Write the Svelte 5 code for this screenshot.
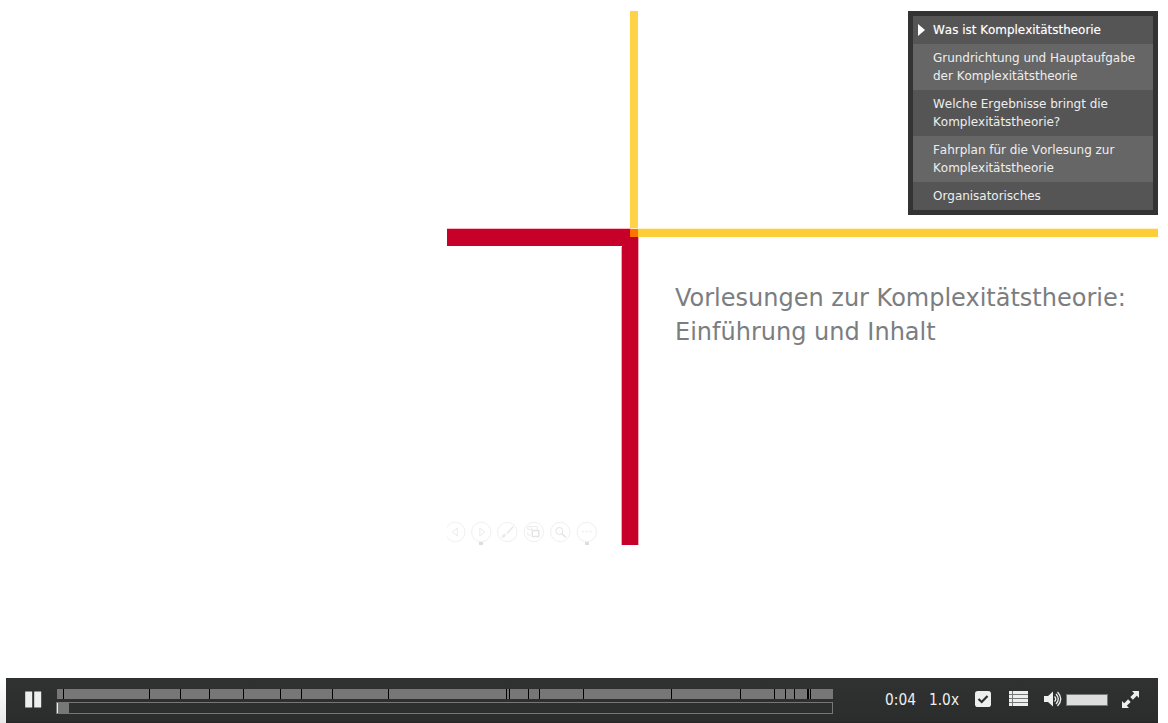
<script>
  const chapters = [
    ['Was ist Komplexitätstheorie'],
    ['Grundrichtung und Hauptaufgabe', 'der Komplexitätstheorie'],
    ['Welche Ergebnisse bringt die', 'Komplexitätstheorie?'],
    ['Fahrplan für die Vorlesung zur', 'Komplexitätstheorie'],
    ['Organisatorisches']
  ];
  const marks = [6, 92, 123, 152, 186, 223, 244, 275, 331, 449, 452, 471, 482, 526, 614, 683, 717, 728, 737, 750, 751, 753];
</script>

<div class="player">
  <div class="stage">
    <div class="slide">
      <svg class="art" width="711" height="534" viewBox="0 0 711 534">
        <rect x="183" y="0" width="8" height="218" fill="#ffd247" />
        <rect x="183" y="217" width="528" height="1" fill="#fff0bd" />
        <rect x="183" y="218" width="528" height="8" fill="#fdce39" />
        <rect x="0" y="217" width="184" height="1" fill="#ffb5c4" />
        <path d="M0 218H191V534H175V235H0Z" fill="#c70029" />
        <rect x="174" y="236" width="1" height="298" fill="#efa4cc" />
        <rect x="191" y="226" width="1" height="308" fill="#e9a9b5" />
        <rect x="183" y="218" width="8" height="8" fill="#ff7200" />
        <g fill="none" stroke="#f0f0f0" transform="translate(-.7 0)">
          {#each [9, 35, 61, 87.5, 114, 140.5] as cx}
            <circle {cx} cy="521" r="9.7" />
          {/each}
          <path d="M11 517l-5 4 5 4zM33.500 517l5 4-5 4z" stroke="#ebebeb" />
          <path d="M60.500 522.500l6.500-7" stroke="#e9e9e9" stroke-width="1.600" />
          <path d="M55 527l3-.5 2-2.500-2-1.500-2 2z" fill="#eaeaea" stroke="none" />
          <path d="M81.500 515.500h4v3h-4zM87 515.500h4v3M81.500 521v3h3" stroke="#ebebeb" />
          <rect x="86" y="519.500" width="6.500" height="6" stroke="#e4e4e4" stroke-width="1.500" />
          <circle cx="113" cy="520" r="3.500" stroke="#e4e4e4" />
          <path d="M115.500 522.500l4 4" stroke="#e4e4e4" stroke-width="1.700" />
          <path d="M135.500 520.500h10" stroke-width="1.500" stroke-dasharray="2.500 1.200" />
        </g>
        <path d="M32 531h4v3h-4zM138 531h4v3h-4z" fill="#dedede" />
      </svg>
      <h1>
        <span class="first">Vorlesungen zur Komplexitätstheorie:</span>
        <span class="second">Einführung und Inhalt</span>
      </h1>
      <ul class="menu">
        {#each chapters as lines, i}
          <li class:active={i === 0}>
            {#each lines as line}<span>{line}</span>{/each}
          </li>
        {/each}
      </ul>
    </div>
  </div>
  <div class="controls">
    <svg class="pause" width="18" height="18" viewBox="0 0 18 18"><path d="M.2 .5h7v16h-7zM9.200 .5h7v16h-7z" fill="#eee" /></svg>
    <div class="tracks">
      <svg class="segments" width="776" height="10" viewBox="0 0 776 10">
        <rect width="776" height="10" fill="#777" />
        {#each marks as x}<rect {x} y="0" width="1" height="10" fill="#000" />{/each}
      </svg>
      <div class="progress"><div class="loaded"></div></div>
    </div>
    <span class="time">0:04</span>
    <span class="rate">1.0x</span>
    <svg class="check" width="16" height="16" viewBox="0 0 16 16"><rect width="16" height="16" rx="2.800" fill="#eee" /><path d="M3.500 8l3.200 3 5.800-6" fill="none" stroke="#2d3030" stroke-width="2.200" /></svg>
    <svg class="list" width="19" height="15" viewBox="0 0 19 15"><path d="M0 0h19v15H0z" fill="#777" /><path d="M0 0h3v3H0zM4 0h15v3H4zM0 4h3v3H0zM4 4h15v3H4zM0 8h3v3H0zM4 8h15v3H4zM0 12h3v3H0zM4 12h15v3H4z" fill="#eee" /></svg>
    <svg class="sound" width="18" height="16" viewBox="0 0 18 16"><path d="M0 5h4l5-4.500v15L4 11H0z" fill="#eee" /><path d="M10.500 5.500q2.500 2.500 0 5M12 3q4.600 5 0 10M13.500 1q6.500 7 0 14" fill="none" stroke="#eee" stroke-width="1.300" /></svg>
    <div class="volume"></div>
    <svg class="full" width="17" height="17" viewBox="0 0 17 17"><path d="M10 0h7v7l-2.200-2.200-3.900 3.900-2.600-2.600 3.900-3.900zM7 17H0v-7l2.200 2.200 3.900-3.900 2.600 2.600-3.900 3.900z" fill="#eee" /></svg>
  </div>
</div>

<style>
  :global(body) { background: #fff; }
  .player {
    width: 1152px;
    height: 723px;
    padding: 0 10px 0 6px;
    overflow: hidden;
    display: flex;
    flex-direction: column;
    font-family: "DejaVu Sans", sans-serif;
    background: linear-gradient(#fff 680px, #e9e9e9 723px) 0 0 / 6px 723px no-repeat;
  }
  .stage { height: 667px; padding-top: 11px; display: flex; justify-content: flex-end; }
  .slide { position: relative; width: 711px; height: 534px; }
  .art { display: block; }
  h1 {
    position: absolute;
    left: 228px;
    top: 270px;
    margin: 0;
    font-size: 24px;
    line-height: 34px;
    font-weight: 400;
    color: #7b7e81;
    white-space: nowrap;
  }
  h1 span { display: block; }
  .menu {
    position: absolute;
    top: 0;
    right: 0;
    width: 240px;
    margin: 0;
    padding: 0;
    border: 5px solid #333;
    list-style: none;
    font-size: 12px;
    font-kerning: none;
    letter-spacing: -.03px;
    line-height: 18px;
    color: #eee;
    white-space: nowrap;
  }
  li { position: relative; padding: 5px 0 5px 20px; background: #555; }
  li:nth-child(even) { background: #666; }
  li span { display: block; }
  .active { color: #fff; text-shadow: 0 0 1px rgba(255, 255, 255, .4); }
  .active::before {
    content: "";
    position: absolute;
    left: 5px;
    top: 8px;
    border: solid transparent;
    border-width: 6px 0 6px 7px;
    border-left-color: #fff;
  }
  .controls {
    height: 45px;
    display: flex;
    align-items: flex-start;
    background: linear-gradient(#303232, #2b2d2d 43px, #252323);
    color: #eee;
    font-family: "DejaVu Sans Condensed", "DejaVu Sans", sans-serif;
    font-stretch: condensed;
    font-size: 15.3px;
  }
  svg { flex: none; display: block; }
  .pause { margin: 13px 0 0 19px; }
  .tracks { margin: 11px 0 0 13px; width: 777px; }
  .segments { margin-left: 1px; }
  .progress { box-sizing: border-box; height: 12px; margin-top: 3px; border: 1px solid #777; }
  .loaded { box-sizing: border-box; width: 12px; height: 10px; background: #777; border-left: 1px solid #eee; }
  .time { width: 44px; margin: 13px 0 0 52px; line-height: 18px; }
  .rate { width: 46px; margin-top: 13px; line-height: 18px; }
  .check { margin-top: 13px; }
  .list { margin: 13px 0 0 18px; }
  .sound { margin: 13px 0 0 16px; }
  .volume { box-sizing: border-box; width: 42px; height: 12px; margin: 16px 0 0 4px; background: #ddd; border: 1px solid #777; }
  .full { margin: 13px 0 0 14px; }
</style>
